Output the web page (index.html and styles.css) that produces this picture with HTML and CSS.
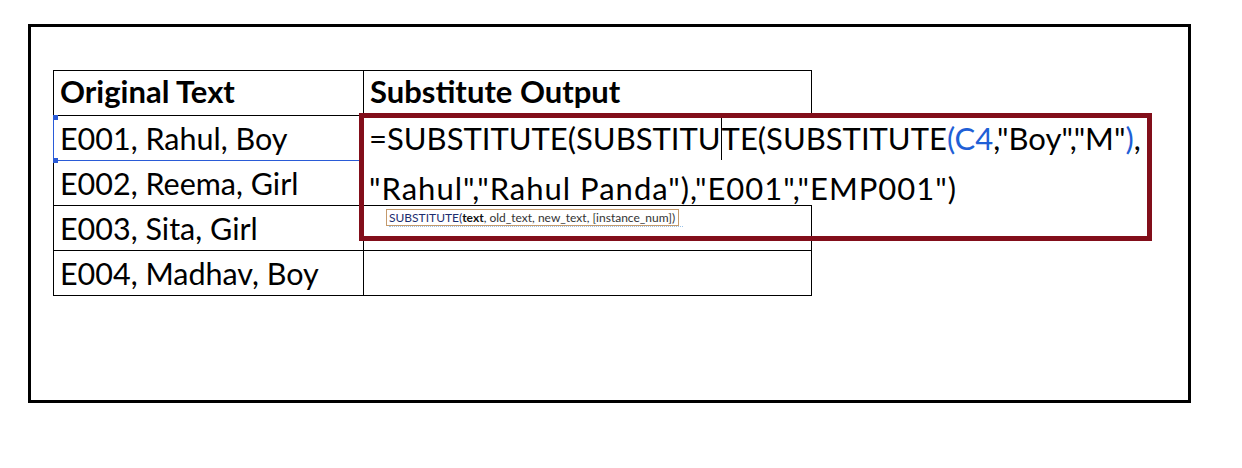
FILE: index.html
```html
<!DOCTYPE html>
<html>
<head>
<meta charset="utf-8">
<link rel="stylesheet" href="styles.css">
</head>
<body>
<div class="frame">
  <table class="sheet">
    <tr><th class="col-a">Original Text</th><th class="col-b">Substitute Output</th></tr>
    <tr><td class="col-a ref">E001, Rahul, Boy<span class="handle h-tl"></span><span class="handle h-bl"></span></td><td class="col-b"></td></tr>
    <tr><td class="col-a">E002, Reema, Girl</td><td class="col-b"></td></tr>
    <tr><td class="col-a">E003, Sita, Girl</td><td class="col-b"></td></tr>
    <tr><td class="col-a">E004, Madhav, Boy</td><td class="col-b"></td></tr>
  </table>
</div>
<div class="callout">
  <div class="editor">
    <div class="fline first">=SUBSTITUTE(SUBSTITU<span class="caret"></span>TE(SUBSTITUTE<span class="ref-c">(C4</span>,"Boy","M"<span class="ref-c">)</span>,</div>
    <div class="fline second">"Rahul","Rahul Panda"),"E001","EMP001")</div>
  </div>
  <div class="tip"><span class="fn">SUBSTITUTE(</span><b>text</b>, old_text, new_text, [instance_num])</div>
</div>
</body>
</html>
```
FILE: styles.css
```css
body {
  margin: 0;
  background: #fff;
  font-family: "Lato", "Liberation Sans", sans-serif;
}
.frame {
  box-sizing: border-box;
  width: 1163px;
  height: 379px;
  margin: 24px 0 0 28px;
  border: 3px solid #000;
  padding: 43px 0 0 22px;
}
.sheet {
  border-collapse: collapse;
  table-layout: fixed;
}
.sheet th, .sheet td {
  border: 1px solid #000;
  height: 45px;
  padding: 0 6px 7px 6px;
  box-sizing: border-box;
  vertical-align: bottom;
  text-align: left;
  font-size: 30.5px;
  font-weight: 400;
  line-height: 1;
  white-space: nowrap;
  color: #000;
}
.sheet th {
  font-weight: 700;
  font-size: 31px;
  padding-bottom: 8px;
}
.col-a { width: 310px; }
.col-b { width: 448px; }
.sheet td.ref {
  position: relative;
  border: 1px solid #2a5bd7;
}
.handle {
  position: absolute;
  width: 5px;
  height: 5px;
  background: #2a5bd7;
}
.h-tl { left: -1px; top: -1px; }
.h-bl { left: -1px; bottom: -3px; }
.callout {
  position: absolute;
  left: 359px;
  top: 113px;
  width: 793px;
  height: 128px;
  box-sizing: border-box;
  border: 5px solid #820e1a;
}
.editor {
  display: flow-root;
  background: #fff;
  height: 87px;
  padding: 0 0 0 5px;
  box-sizing: border-box;
}
.fline {
  font-size: 31px;
  white-space: nowrap;
  color: #000;
}
.fline.first { line-height: 40px; }
.fline.second {
  line-height: 56px;
  letter-spacing: 1px;
}
.caret {
  display: inline-block;
  width: 1px;
  height: 42px;
  background: #000;
  vertical-align: -10px;
}
.ref-c { color: #1f5fd6; }
.tip {
  position: relative;
  width: max-content;
  margin: 4px 0 0 22px;
  padding: 0 3px 0 2px;
  border: 1px solid #c49a6c;
  font-family: "Lato", sans-serif;
  font-size: 12px;
  line-height: 15px;
  color: #333;
  background: #fff;
}
.tip::after {
  content: "";
  position: absolute;
  left: 2px;
  right: -5px;
  bottom: -2px;
  border-bottom: 1px dotted #9cc3e8;
}
.tip .fn { color: #1d2d6e; }
.tip b { color: #111; }
```
